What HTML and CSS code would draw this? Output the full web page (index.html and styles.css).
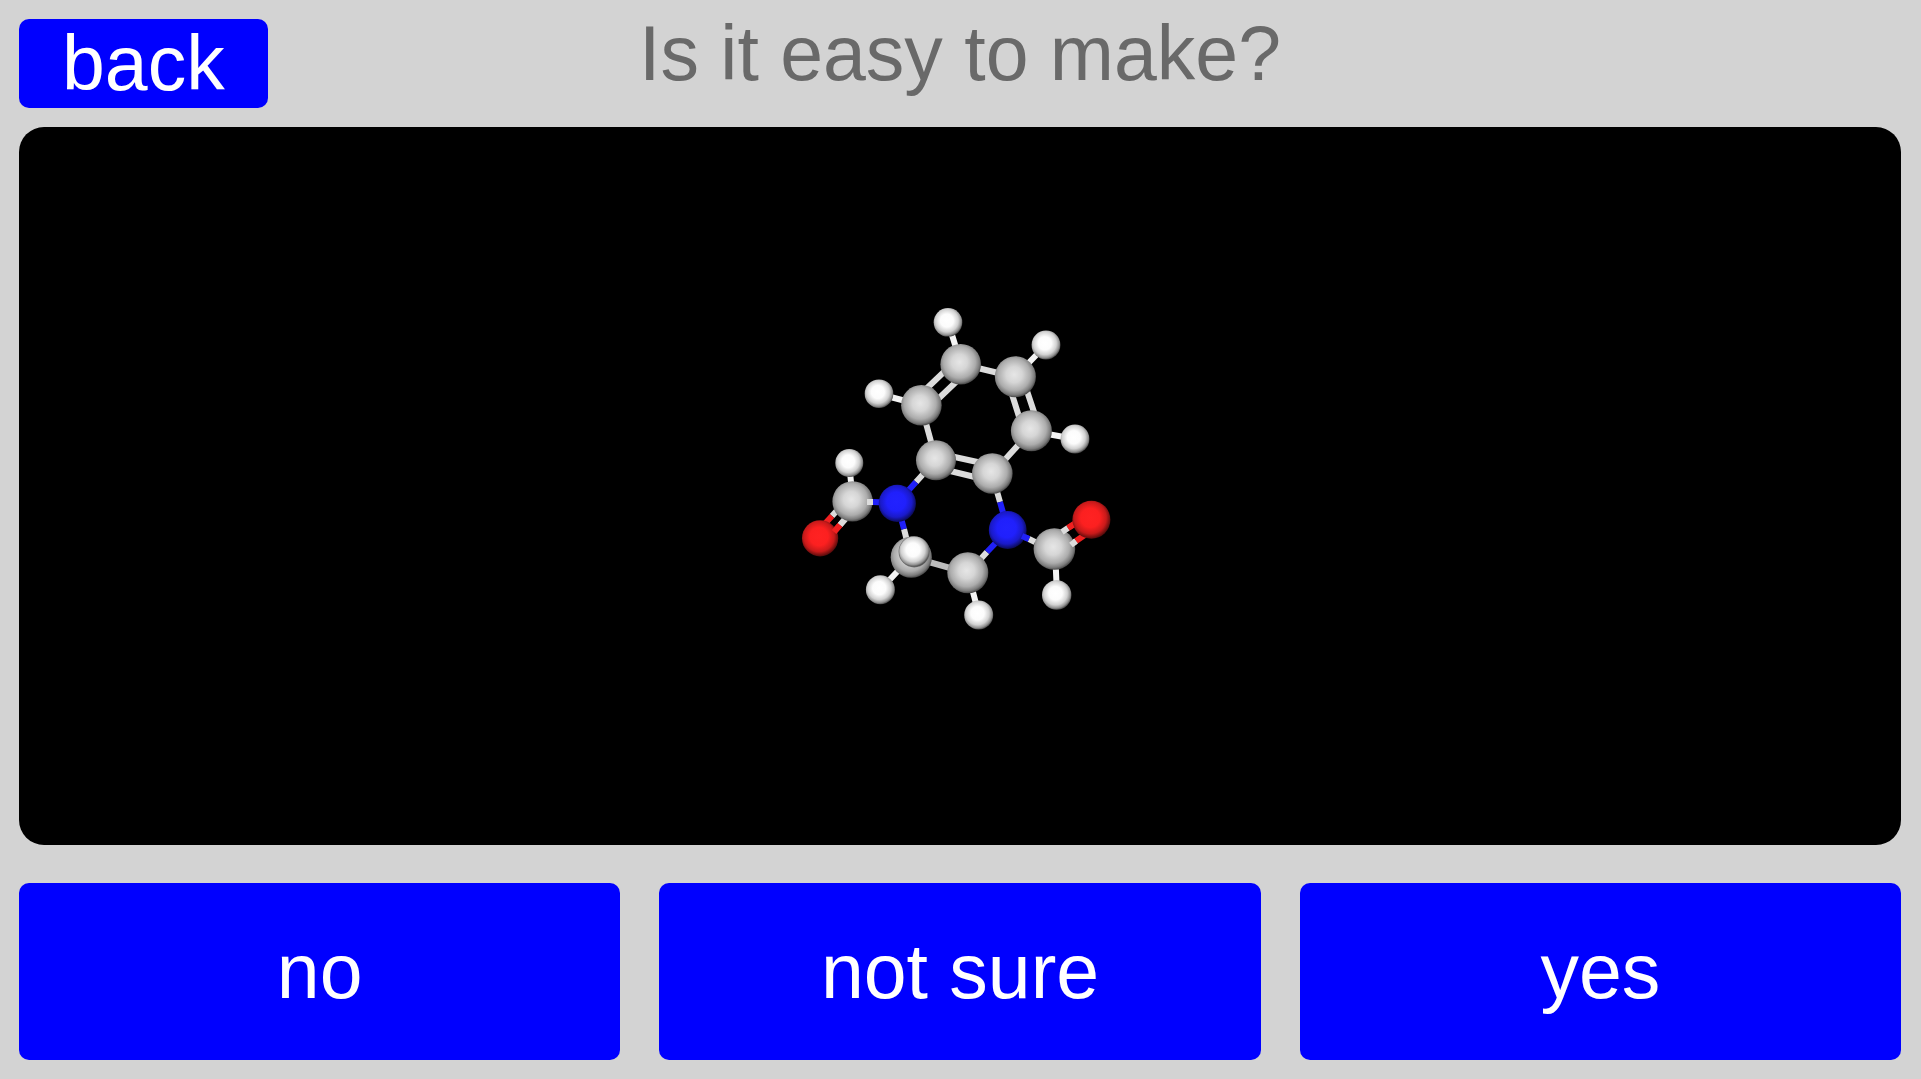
FILE: index.html
```html
<!DOCTYPE html>
<html lang="en">
<head>
<meta charset="utf-8">
<meta name="viewport" content="width=device-width, initial-scale=1">
<title>Is it easy to make?</title>
<link rel="stylesheet" href="styles.css">
</head>
<body>
<header class="top">
  <button class="button back" type="button">back</button>
  <h1 class="question">Is it easy to make?</h1>
</header>
<main class="viewer">
  <svg class="molecule" viewBox="780 286 360 400" role="img" aria-label="Ball-and-stick molecule">
    <defs>
      <radialGradient id="carbon" cx=".47" cy=".45" r=".56">
        <stop offset="0" stop-color="#e6e6e6"/>
        <stop offset=".35" stop-color="#d6d6d6"/>
        <stop offset=".7" stop-color="#acacac"/>
        <stop offset=".88" stop-color="#7c7c7c"/>
        <stop offset="1" stop-color="#404040"/>
      </radialGradient>
      <radialGradient id="hydrogen" cx=".46" cy=".44" r=".57">
        <stop offset="0" stop-color="#fff"/>
        <stop offset=".4" stop-color="#fcfcfc"/>
        <stop offset=".7" stop-color="#d2d2d2"/>
        <stop offset=".88" stop-color="#929292"/>
        <stop offset="1" stop-color="#444"/>
      </radialGradient>
      <radialGradient id="nitrogen" cx=".47" cy=".45" r=".56">
        <stop offset="0" stop-color="#2222ff"/>
        <stop offset=".45" stop-color="#2020fc"/>
        <stop offset=".75" stop-color="#1a1ac8"/>
        <stop offset="1" stop-color="#0a0a4c"/>
      </radialGradient>
      <radialGradient id="oxygen" cx=".47" cy=".45" r=".56">
        <stop offset="0" stop-color="#ff2222"/>
        <stop offset=".45" stop-color="#fc2020"/>
        <stop offset=".75" stop-color="#c81a1a"/>
        <stop offset="1" stop-color="#4c0a0a"/>
      </radialGradient>
    </defs>
    <!-- hydrogen and carbon bonds -->
    <g class="bond">
      <path d="M948 322 961 364M879 394 921 405M1046 345 1015 377M1075 439 1031 431M849 463 853 501M880 590 911 557M979 615 968 573M1057 595 1055 549"/>
      <path class="bond-carbon" d="M961 364 1015 377M921 405 936 460M1031 431 992 474M924 391 947 369M936 401 958 380M1010 388 1021 423M1025 385 1036 418M950 456 982 463M946 470 979 478"/>
      <path class="bond-far" d="M911 557 968 573"/>
    </g>
    <!-- bonds split between carbon and its neighbour -->
    <g class="bond">
      <path class="bond-carbon" d="M916 482 936 460M904 529 911 557M1000 502 992 474M987 552 968 573M832 516 842 505M840 525 850 514M1076 541 1064 550"/>
      <path class="bond-nitrogen" d="M897 503 916 482M897 503 904 529M1008 530 1000 502M1008 530 1029 539M1008 530 987 552M873 502 897 503"/>
      <path class="bond-oxygen" d="M820 529 832 516M829 537 840 525M1068 528 1080 520M1076 541 1089 532"/>
    </g>
    <circle cx="948" cy="322.3" r="14.3" fill="url(#hydrogen)"/>
    <circle cx="879" cy="393.7" r="14.3" fill="url(#hydrogen)"/>
    <circle cx="1046" cy="345" r="14.4" fill="url(#hydrogen)"/>
    <circle cx="1075" cy="439" r="14.4" fill="url(#hydrogen)"/>
    <circle cx="849.3" cy="463" r="14" fill="url(#hydrogen)"/>
    <circle cx="880.4" cy="589.8" r="14.5" fill="url(#hydrogen)"/>
    <circle cx="978.7" cy="615" r="14.5" fill="url(#hydrogen)"/>
    <circle cx="1056.7" cy="595" r="14.7" fill="url(#hydrogen)"/>
    <circle cx="960.7" cy="364.2" r="20.3" fill="url(#carbon)"/>
    <circle cx="921.4" cy="405.3" r="20.3" fill="url(#carbon)"/>
    <circle cx="1015.4" cy="376.7" r="20.5" fill="url(#carbon)"/>
    <circle cx="1031.4" cy="430.8" r="20.5" fill="url(#carbon)"/>
    <circle cx="936" cy="460.3" r="20" fill="url(#carbon)"/>
    <circle cx="992.3" cy="473.5" r="20.3" fill="url(#carbon)"/>
    <circle cx="852.6" cy="501.4" r="20.2" fill="url(#carbon)"/>
    <circle cx="911.3" cy="557.2" r="20.6" fill="url(#carbon)"/>
    <circle cx="967.8" cy="572.7" r="20.5" fill="url(#carbon)"/>
    <circle cx="1054.4" cy="549" r="20.8" fill="url(#carbon)"/>
    <circle cx="897.3" cy="503.4" r="18.6" fill="url(#nitrogen)"/>
    <circle cx="1007.7" cy="530" r="18.9" fill="url(#nitrogen)"/>
    <circle cx="820.1" cy="538.3" r="18.1" fill="url(#oxygen)"/>
    <circle cx="1091.4" cy="519.7" r="19" fill="url(#oxygen)"/>
    <!-- parts that lie in front of their atoms -->
    <g class="bond">
      <path class="bond-carbon" d="M867 502 873 502M1029 539 1035 542M1062 532 1068 528M1071 545 1076 541M840 525 844 520"/>
      <path class="bond-oxygen" d="M1068 528 1073 525M834 532 840 525"/>
      <path class="bond-nitrogen" d="M1022 536 1029 539"/>
    </g>
    <circle cx="914.2" cy="551.8" r="15.6" fill="#6c6c6c"/>
    <circle cx="914.2" cy="551.6" r="15" fill="url(#hydrogen)"/>
  </svg>
</main>
<footer class="answers">
  <button class="button" type="button">no</button>
  <button class="button" type="button">not sure</button>
  <button class="button" type="button">yes</button>
</footer>
</body>
</html>
```
FILE: styles.css
```css
* {
  box-sizing: border-box;
}

body {
  display: flex;
  flex-direction: column;
  gap: 19px;
  min-height: 100vh;
  margin: 0;
  padding: 19px 20px 19px 19px;
  background: #d3d3d3;
  color: #696969;
  font-family: "Liberation Sans", Arial, sans-serif;
  font-size: 77px;
  line-height: 89px;
}

.top {
  display: grid;
  grid-template-columns: 1fr auto 1fr;
  align-items: start;
}

.question {
  margin: 0;
  font-size: inherit;
  font-weight: normal;
  line-height: 68px;
}

.button {
  padding: 44px 0;
  border: 0;
  border-radius: 10px;
  background: #00f;
  color: #fff;
  font: inherit;
  cursor: pointer;
}

.back {
  justify-self: start;
  padding: 0 43px;
}

.viewer {
  display: flex;
  flex: 1;
  align-items: center;
  justify-content: center;
  border-radius: 25px;
  background: #000;
}

.molecule {
  width: 360px;
  height: 400px;
}

.bond {
  fill: none;
  stroke: #f4f4f4;
  stroke-width: 6px;
}

.bond-carbon {
  stroke: #dcdcdc;
}

.bond-far {
  stroke: #bcbcbc;
}

.bond-nitrogen {
  stroke: #2020f8;
}

.bond-oxygen {
  stroke: #f02020;
}

.answers {
  display: grid;
  grid-template-columns: repeat(3, 1fr);
  gap: 39px;
  margin-top: 19px;
}
```
